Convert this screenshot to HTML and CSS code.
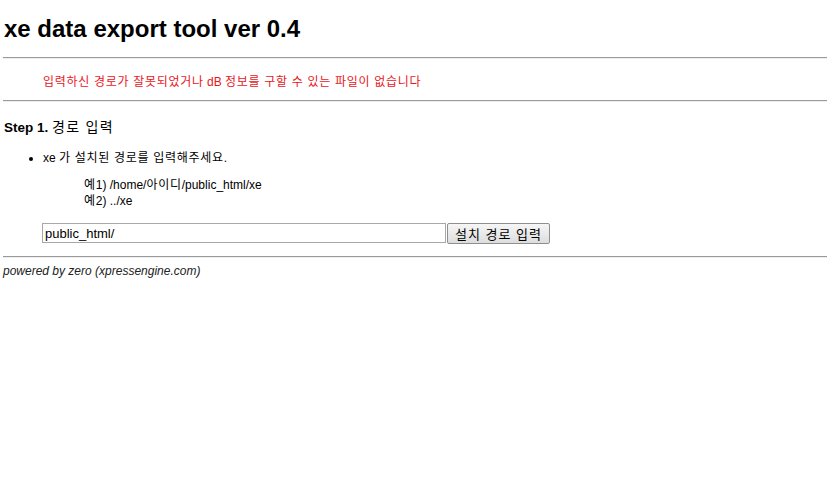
FILE: index.html
```html
<!DOCTYPE html>
<html lang="ko">
<head>
<meta charset="utf-8">
<title>xe data export tool ver 0.4</title>
<link rel="stylesheet" href="styles.css">
</head>
<body>
<h1 class="title">xe data export tool ver 0.4</h1>
<hr class="rule">
<blockquote class="error"><span class="ko">입력하신 경로가 잘못되었거나</span> dB <span class="ko">정보를 구할 수 있는 파일이 없습니다</span></blockquote>
<hr class="rule">
<h3 class="step">Step 1. <span class="ko-head">경로 입력</span></h3>
<ul class="guide">
  <li>xe <span class="ko">가 설치된 경로를 입력해주세요</span>.
    <blockquote class="examples"><span class="ko">예</span>1) /home/<span class="ko">아이디</span>/public_html/xe<br><span class="ko">예</span>2) ../xe</blockquote>
  </li>
</ul>
<form class="path-form">
  <input class="path-input" type="text" value="public_html/"><button class="path-btn" type="button">설치 경로 입력</button>
</form>
<hr class="rule">
<address class="footer">powered by zero (xpressengine.com)</address>
</body>
</html>
```
FILE: styles.css
```css
html, body {
  margin: 0;
  padding: 0;
  background: #fff;
}
body {
  padding: 0 0 0 3px;
  font-family: "Liberation Sans", "Noto Sans CJK KR", Arial, sans-serif;
  font-size: 12px;
  color: #000;
}
.ko {
  letter-spacing: 0.7px;
}
.title {
  margin: 0;
  padding: 15px 0 0 1px;
  font-size: 24px;
  font-weight: bold;
  line-height: 28px;
}
.rule {
  margin: 0;
  border: 0;
  border-top: 1px solid #9a9a9a;
  border-bottom: 1px solid #eeeeee;
  height: 0;
}
.title + .rule {
  margin-top: 14px;
}
.error {
  margin: 0;
  padding: 15px 0 10px 40px;
  color: #e8161b;
  line-height: 16px;
  font-size: 12px;
}
.step {
  margin: 0;
  padding: 17px 0 0 1px;
  font-size: 13.5px;
  font-weight: bold;
  line-height: 17px;
}
.ko-head {
  font-weight: normal;
  font-size: 14px;
  letter-spacing: 1.3px;
}
.guide {
  margin: 14px 0 0 0;
  padding: 0 0 0 40px;
  list-style: disc;
  line-height: 16px;
}
.examples {
  margin: 11px 0 0 41px;
  line-height: 16px;
}
.path-form {
  margin: 14px 0 0 39px;
  display: flex;
  align-items: stretch;
}
.path-input {
  width: 404px;
  height: 20px;
  box-sizing: border-box;
  border: 1px solid #a8a8a8;
  padding: 0 2px;
  margin: 0;
  font-family: "Liberation Sans", Arial, sans-serif;
  font-size: 13px;
  color: #000;
}
.path-btn {
  margin: 0 0 0 1px;
  width: 103px;
  height: 21px;
  box-sizing: border-box;
  border: 1px solid #8f8f8f;
  border-radius: 2px;
  background: linear-gradient(#f6f6f6, #dddddd);
  font-family: "Liberation Sans", "Noto Sans CJK KR", sans-serif;
  font-size: 13px;
  letter-spacing: 1px;
  color: #000;
  padding: 0;
}
.path-form + .rule {
  margin-top: 12px;
}
.footer {
  margin: 0;
  padding: 6px 0 0 0;
  font-style: italic;
  line-height: 14px;
  color: #222;
}
```
